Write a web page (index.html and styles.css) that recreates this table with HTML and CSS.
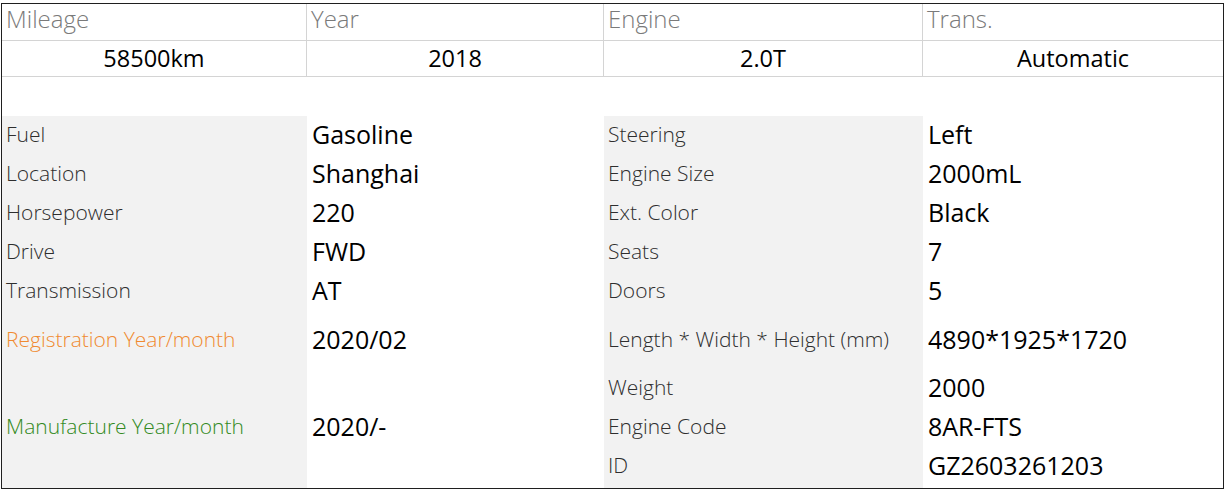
FILE: index.html
```html
<!DOCTYPE html>
<html lang="en">
<head>
<meta charset="utf-8">
<title>Vehicle specs</title>
<link rel="stylesheet" href="styles.css">
</head>
<body>
<div class="sheet">
  <div class="summary">
    <div class="sum-head">Mileage</div>
    <div class="sum-head">Year</div>
    <div class="sum-head">Engine</div>
    <div class="sum-head last">Trans.</div>
    <div class="sum-val">58500km</div>
    <div class="sum-val">2018</div>
    <div class="sum-val">2.0T</div>
    <div class="sum-val last">Automatic</div>
  </div>
  <div class="gap"></div>
  <div class="details">
    <div class="lab c1 r1">Fuel</div>
    <div class="val c2 r1">Gasoline</div>
    <div class="lab c1 r2">Location</div>
    <div class="val c2 r2">Shanghai</div>
    <div class="lab c1 r3">Horsepower</div>
    <div class="val c2 r3">220</div>
    <div class="lab c1 r4">Drive</div>
    <div class="val c2 r4">FWD</div>
    <div class="lab c1 r5">Transmission</div>
    <div class="val c2 r5">AT</div>
    <div class="lab c1 r6 orange">Registration Year/month</div>
    <div class="val c2 r6">2020/02</div>
    <div class="lab c1 r7 span3 green">Manufacture Year/month</div>
    <div class="val c2 r7 span3">2020/-</div>

    <div class="lab c3 r1">Steering</div>
    <div class="val c4 r1">Left</div>
    <div class="lab c3 r2">Engine Size</div>
    <div class="val c4 r2">2000mL</div>
    <div class="lab c3 r3">Ext. Color</div>
    <div class="val c4 r3">Black</div>
    <div class="lab c3 r4">Seats</div>
    <div class="val c4 r4">7</div>
    <div class="lab c3 r5">Doors</div>
    <div class="val c4 r5">5</div>
    <div class="lab c3 r6">Length * Width * Height (mm)</div>
    <div class="val c4 r6">4890*1925*1720</div>
    <div class="lab c3 r7">Weight</div>
    <div class="val c4 r7">2000</div>
    <div class="lab c3 r8">Engine Code</div>
    <div class="val c4 r8">8AR-FTS</div>
    <div class="lab c3 r9">ID</div>
    <div class="val c4 r9">GZ2603261203</div>
  </div>
</div>
</body>
</html>
```
FILE: styles.css
```css
html, body {
  margin: 0;
  padding: 0;
  background: #ffffff;
}
body {
  padding: 3px 0 0 1px;
  font-family: "Open Sans", "Noto Sans", "Liberation Sans", sans-serif;
}
.sheet {
  width: 1223px;
  height: 486px;
  border: 1px solid #1f1f1f;
  box-sizing: border-box;
  display: flex;
  flex-direction: column;
  overflow: hidden;
}
.summary {
  display: grid;
  grid-template-columns: 305px 297px 319px 1fr;
  grid-template-rows: 37px 36px;
}
.sum-head {
  border-right: 1px solid #d4d4d4;
  border-bottom: 1px solid #d4d4d4;
  color: #7a7a7a;
  font-weight: 300;
  font-size: 24px;
  line-height: 30px;
  padding-left: 4px;
}
.sum-val {
  border-right: 1px solid #d4d4d4;
  border-bottom: 1px solid #d4d4d4;
  color: #000;
  font-size: 23.5px;
  text-align: center;
  line-height: 34px;
}
.last {
  border-right: none;
}
.gap {
  height: 39px;
}
.details {
  flex: 1;
  display: grid;
  grid-template-columns: 305px 297px 319px 1fr;
  grid-template-rows: repeat(5, 39px) 58px repeat(3, 39px);
  background: linear-gradient(to right, #f2f2f2 0 305px, #fff 305px 602px, #f2f2f2 602px 921px, #fff 921px);
}
.lab {
  display: flex;
  align-items: center;
  padding: 0 0 3px 4px;
  color: #2e2e2e;
  font-weight: 300;
  font-size: 21px;
}
.val {
  display: flex;
  align-items: center;
  padding: 0 0 3px 5px;
  color: #000;
  font-size: 25px;
}
.c1 { grid-column: 1; }
.c2 { grid-column: 2; }
.c3 { grid-column: 3; }
.c4 { grid-column: 4; }
.r1 { grid-row: 1; }
.r2 { grid-row: 2; }
.r3 { grid-row: 3; }
.r4 { grid-row: 4; }
.r5 { grid-row: 5; }
.r6 { grid-row: 6; }
.r7 { grid-row: 7; }
.r8 { grid-row: 8; }
.r9 { grid-row: 9; }
.span3 { grid-row: 7 / span 3; }
.orange { color: #f08a30; }
.green { color: #338a22; }
```
